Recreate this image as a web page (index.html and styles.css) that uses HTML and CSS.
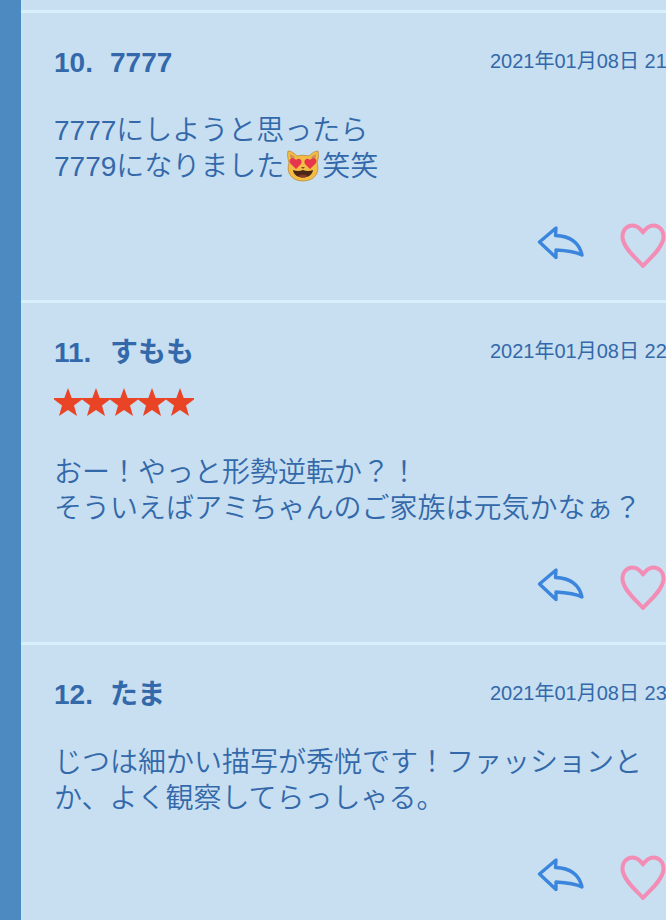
FILE: index.html
```
<!DOCTYPE html>
<html lang="ja">
<head>
<meta charset="UTF-8" />
<meta name="viewport" content="width=device-width, initial-scale=1" />
<title>コメント</title>
<link rel="stylesheet" href="styles.css">
</head>
<body>
<svg class="defs" width="0" height="0">
  <symbol id="reply" viewBox="0 0 48 36">
    <path d="M2.500 17 L19 3 L18.500 10.500 C33 11 42 17 45 30 C37 26 28 25.500 19 25 L19 32.500 Z" />
  </symbol>
  <symbol id="heart" viewBox="0 0 46 46">
    <path d="M23 43 C17 36 4 26 2.500 15 C2 7 7 2.500 12.500 2.500 C17 2.500 20 5 23 9.500 C26 5 29 2.500 33.500 2.500 C39 2.500 44 7 43.500 15 C42 26 29 36 23 43 Z" />
  </symbol>
  <symbol id="star" viewBox="0 0 28 28">
    <path d="M14 0 L17.700 10 H28 V11.500 L20 17.500 L23 28 L14 22 L5 28 L8 17.500 L0 11.500 V10 H10.300 Z" />
  </symbol>
</svg>

<div class="comments">
  <div class="comment">
    <div class="head">
      <h2><span class="no">10.</span>7777</h2>
      <span class="date">2021年01月08日 21</span>
    </div>
    <p>7777にしようと思ったら<br>7779になりました<svg class="emoji" viewBox="0 0 38 34">
      <path fill="#f3bd45" stroke="#b9822b" stroke-width=".7" d="M4 2 C8 2 11 5 13 7 C17 6 21 6 25 7 C28 4 31 2 34 2 C35 7 34 11 33 14 C36 23 31 32 19 32 C7 32 2 23 5 14 C4 10 3 6 4 2 Z" />
      <path fill="#cf8b58" d="M6 5 L11 8 L7 12 Z M32 5 L27 8 L31 12 Z" />
      <path fill="#e5364b" d="M12 20 L6 14 C4 9 10 8 12 11 C15 8 19 11 17 15 Z M26 20 L21 15 C19 11 23 8 26 11 C28 8 34 9 32 14 Z" />
      <path fill="#4b2717" d="M9 21 Q14 23 19 21 Q24 23 29 21 C28 31 10 31 9 21 Z" />
      <path fill="#8a3a2b" d="M14 27 Q19 24 24 27 Q19 30 14 27 Z" />
      <path fill="#8b442c" d="M17 18 H21 L19 20 Z" />
    </svg>笑笑</p>
    <div class="actions">
      <svg class="reply"><use href="#reply" /></svg>
      <svg class="heart"><use href="#heart" /></svg>
    </div>
  </div>

  <div class="comment">
    <div class="head">
      <h2><span class="no">11.</span>すもも</h2>
      <span class="date">2021年01月08日 22</span>
    </div>
    <div class="stars">
      <svg><use href="#star" /></svg>
      <svg><use href="#star" /></svg>
      <svg><use href="#star" /></svg>
      <svg><use href="#star" /></svg>
      <svg><use href="#star" /></svg>
    </div>
    <p>おー！やっと形勢逆転か？！<br>そういえばアミちゃんのご家族は元気かなぁ？</p>
    <div class="actions">
      <svg class="reply"><use href="#reply" /></svg>
      <svg class="heart"><use href="#heart" /></svg>
    </div>
  </div>

  <div class="comment">
    <div class="head">
      <h2><span class="no">12.</span>たま</h2>
      <span class="date">2021年01月08日 23</span>
    </div>
    <p>じつは細かい描写が秀悦です！ファッションと<br>か、よく観察してらっしゃる。</p>
    <div class="actions">
      <svg class="reply"><use href="#reply" /></svg>
      <svg class="heart"><use href="#heart" /></svg>
    </div>
  </div>
</div>
</body>
</html>
```
FILE: styles.css
```
body {
  margin: 0; height: 920px; overflow: hidden; background: #c8dff1; color: #3369aa;
  font-family: "Liberation Sans", "Noto Sans CJK JP", sans-serif;
}
.defs { display: block; }
.comments {
  box-sizing: border-box; height: 920px; padding-top: 10px; overflow: hidden;
  border-left: 21px solid #4e8ac2; box-shadow: inset 2px 0 #c4e5f8;
}
.comment { border-top: 3px solid #d8effc; padding: 32px 0 31px 33px; white-space: nowrap; }
.head { display: flex; height: 36px; }
h2 { margin: 0; width: 436px; flex: none; font-size: 28px; line-height: 36px; font-weight: bold; }
.no { display: inline-block; width: 56px; }
.date { font-size: 20px; line-height: 32px; }
.stars { display: flex; height: 28px; margin: 17px 0 39px; fill: #e94426; }
.stars svg { width: 28px; height: 28px; }
p { margin: 32px 0 0; font-size: 28px; line-height: 36px; font-weight: 350; }
.emoji { width: 38px; height: 34px; vertical-align: -6px; margin: -6px 0; position: relative; top: -5px; }
.actions {
  display: flex; gap: 35px; height: 46px; margin-top: 38px; padding-left: 483px;
  fill: none; stroke-linejoin: round;
}
.reply { width: 48px; height: 36px; margin-top: 2px; flex: none; stroke: #3b86dc; stroke-width: 3.4px; }
.heart { width: 46px; height: 46px; flex: none; stroke: #f28db5; stroke-width: 4px; }
```
